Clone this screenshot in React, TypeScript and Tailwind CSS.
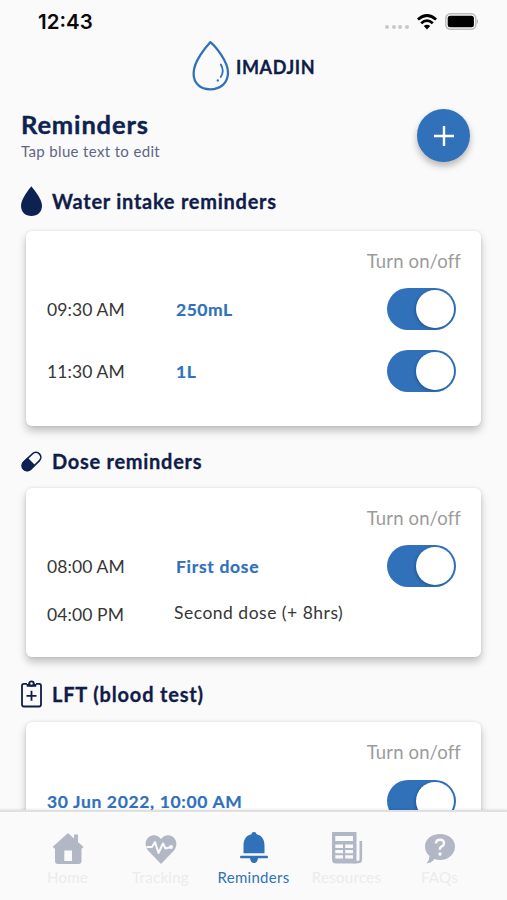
import type { ReactNode } from "react";

function Toggle() {
  return (
    <div className="flex h-[42px] w-[69px] items-center justify-end rounded-full bg-[#3071ba] pr-[2px]">
      <div className="size-[38px] rounded-full bg-white shadow-[-1px_1px_3px_rgba(0,0,40,0.25)]" />
    </div>
  );
}

function SectionTitle({ icon, children }: { icon: ReactNode; children: ReactNode }) {
  return (
    <div className="flex h-[30px] items-center [-webkit-text-stroke:0.3px]">
      <div className="flex w-[31px] shrink-0 items-center">{icon}</div>
      {children}
    </div>
  );
}

function Card({ className, children }: { className: string; children: ReactNode }) {
  return (
    <div
      className={`mx-[5px] rounded-[6px] bg-white pt-[19px] pl-[21px] shadow-[0_5px_8px_rgba(0,0,0,0.23),0_0_3px_rgba(0,0,0,0.1)] ${className}`}
    >
      <div className="flex h-[24px] items-center justify-end pr-[20px] text-[18.5px] tracking-[0.15px] text-[#9b9b9b]">
        Turn on/off
      </div>
      {children}
    </div>
  );
}

function Row({ time, children, toggle }: { time: string; children: ReactNode; toggle?: boolean }) {
  return (
    <div className="flex items-center">
      <div className="w-[129px] pt-[2px] text-[17.5px] tracking-[0.1px] text-[#363636]">{time}</div>
      <div className="flex grow">{children}</div>
      {toggle && (
        <div className="pr-[25px]">
          <Toggle />
        </div>
      )}
    </div>
  );
}

function NavItem({ label, active, children }: { label: ReactNode; active?: boolean; children: ReactNode }) {
  return (
    <div className={`flex w-[93px] flex-col items-center ${active ? "text-[#3071ba]" : "text-[#b2b7c5]"}`}>
      <svg width="36" height="36" viewBox="0 0 36 36" fill="currentColor">
        {children}
      </svg>
      <div className={`mt-[2px] h-[20px] text-[15px] leading-[20px] whitespace-nowrap ${active ? "" : "text-[#ebecee]"}`}>
        {label}
      </div>
    </div>
  );
}

export default function App() {
  return (
    <div className="flex h-[900px] w-[507px] flex-col overflow-hidden bg-[#fafafa] font-['Lato',sans-serif]">
      <header className="flex h-[41px] shrink-0 items-center pt-[3px] pr-[28px] pl-[38px]">
        <div className="font-['Inter',sans-serif] text-[20.5px] font-semibold text-[#0a0a0a]">12:43</div>
        <div className="ml-auto flex items-center">
          <div className="mt-[9px] mr-[8.5px] flex gap-[2.4px]">
            <i className="size-[4px] rounded-full bg-[#c8c8c8]" />
            <i className="size-[4px] rounded-full bg-[#c8c8c8]" />
            <i className="size-[4px] rounded-full bg-[#c8c8c8]" />
            <i className="size-[4px] rounded-full bg-[#c8c8c8]" />
          </div>
          <svg width="20" height="16" viewBox="0 0 20 16" fill="none" stroke="#000" strokeWidth="2.8">
            <path d="M.9 5.5Q10-2.4 19.1 5.5" />
            <path d="M4.2 9.2Q10 4 15.8 9.2" />
            <path d="M6.8 12Q10 9.4 13.2 12L10 15.4Z" fill="#000" stroke="none" />
          </svg>
          <svg className="-mt-[1px] ml-[8px]" width="34" height="17" viewBox="0 0 34 17">
            <rect x=".8" y=".8" width="30" height="15.4" rx="4.5" fill="#fafafa" stroke="#bdbdbd" strokeWidth="1.5" />
            <rect x="2.7" y="2.7" width="26.2" height="11.6" rx="2.5" />
            <path d="M32 6Q34 8.5 32 11Z" fill="#aaa" />
          </svg>
        </div>
      </header>

      <div className="flex h-[50px] shrink-0 items-center pl-[192px]">
        <svg width="38" height="50" viewBox="0 0 38 50" fill="none" stroke="#3071ba" strokeLinecap="round" strokeLinejoin="round">
          <path
            d="M18.3 1.2C13.8 6 1.6 20.5 1.6 32.5C1.6 42.5 8.6 48.3 18 48.3C28.5 48.3 36 42 36 31.5C36 20.5 23.4 5.2 18.3 1.2Z"
            strokeWidth="2.3"
          />
          <path d="M28.8 23.5Q32.8 30 28.7 36" strokeWidth="1.8" />
          <circle cx="25.8" cy="39.4" r=".6" strokeWidth="1.2" />
        </svg>
        <div className="mt-[2px] ml-[6px] text-[18px] font-bold tracking-[0.6px] text-[#101c49] [-webkit-text-stroke:0.3px]">
          IMADJIN
        </div>
      </div>

      <div className="flex h-[95px] shrink-0 pt-[18px] pr-[37px] pl-[21px]">
        <div className="grow">
          <h1 className="-mt-[1px] h-[33px] text-[25.5px] leading-[32px] font-bold text-[#0e2251] [-webkit-text-stroke:0.4px]">
            <span className="tracking-[0.85px]">Reminders</span>
          </h1>
          <p className="h-[20px] text-[15px] leading-[20px] tracking-[0.35px] text-[#5f6685]">Tap blue text to edit</p>
        </div>
        <div className="flex size-[53px] items-center justify-center rounded-full bg-[#3071ba] shadow-[0_4px_7px_rgba(0,0,0,0.28)]">
          <svg width="20" height="20" viewBox="0 0 20 20" stroke="#fff" strokeWidth="2.4">
            <path d="M0 10H20M10 0V20" />
          </svg>
        </div>
      </div>

      <main className="min-h-0 grow overflow-hidden px-[21px] text-[20px] text-[#101c49]">
        <SectionTitle
          icon={
            <svg width="21" height="30" viewBox="0 0 21 30" fill="#0e2251">
              <path d="M10.3.2C7.2 4 0 13.5 0 19.5C0 26 4.2 30 10.4 30C16.5 30 21 26 21 19.5C21 13.5 13.5 4 10.3.2Z" />
            </svg>
          }
        >
          <span className="font-bold tracking-[0.74px]">Water intake reminders</span>
        </SectionTitle>

        <Card className="mt-[15px] h-[195px]">
          <div className="mt-[14px]">
            <Row time="09:30 AM" toggle>
              <span className="pt-[2px] text-[17.5px] font-bold tracking-[0.5px] text-[#3071ba] [-webkit-text-stroke:0.2px]">250mL</span>
            </Row>
          </div>
          <div className="mt-[20px]">
            <Row time="11:30 AM" toggle>
              <span className="pt-[2px] text-[17.5px] font-bold tracking-[0.5px] text-[#3071ba] [-webkit-text-stroke:0.2px]">1L</span>
            </Row>
          </div>
        </Card>

        <div className="mt-[20px]">
          <SectionTitle
            icon={
              <svg width="21" height="21" viewBox="0 0 21 21">
                <g transform="rotate(-44 10.5 10.5)">
                  <rect x="-.5" y="5.6" width="22" height="9.8" rx="4.9" fill="none" stroke="#0e2251" strokeWidth="1.7" />
                  <path d="M10.5 4.8V16.2H4.6A5.7 5.7 0 0 1 4.6 4.8Z" fill="#0e2251" />
                </g>
              </svg>
            }
          >
            <span className="font-bold tracking-[0.72px]">Dose reminders</span>
          </SectionTitle>
        </div>

        <Card className="mt-[12px] h-[169px]">
          <div className="mt-[14px]">
            <Row time="08:00 AM" toggle>
              <span className="pt-[3px] text-[17.5px] font-bold tracking-[0.7px] text-[#3071ba] [-webkit-text-stroke:0.2px]">
                First dose
              </span>
            </Row>
          </div>
          <div className="mt-[13px]">
            <Row time="04:00 PM">
              <span className="-mt-[2px] -ml-[2px] text-[17.5px] tracking-[0.5px] text-[#363636]">Second dose (+ 8hrs)</span>
            </Row>
          </div>
        </Card>

        <div className="mt-[22px]">
          <SectionTitle
            icon={
              <svg width="21" height="28" viewBox="0 0 21 28" fill="none" stroke="#101c49" strokeWidth="1.8">
                <path d="M6 3.9H2.8Q1 3.9 1 5.7V24.6Q1 26.5 2.8 26.5H18.2Q20 26.5 20 24.6V5.7Q20 3.9 18.2 3.9H15" />
                <path d="M5.7 6.7V3.9H7.4Q7.8 1.2 10.5 1.2T13.6 3.9H15.3V6.7Z" fill="#101c49" stroke="none" />
                <circle cx="10.5" cy="3.6" r="2.2" strokeWidth="1.9" fill="#fafafa" />
                <path d="M5.5 15.8H15.5M10.5 10.8V20.8" />
              </svg>
            }
          >
            <span className="font-bold tracking-[0.82px]">LFT (blood test)</span>
          </SectionTitle>
        </div>

        <Card className="mt-[13px] h-[169px]">
          <div className="mt-[15px] flex items-center justify-between pr-[25px]">
            <span className="pt-[2px] text-[17.5px] font-bold tracking-[0.65px] text-[#3071ba] [-webkit-text-stroke:0.2px]">
              30 Jun 2022, 10:00 AM
            </span>
            <Toggle />
          </div>
        </Card>
      </main>

      <nav className="relative z-10 flex h-[90px] shrink-0 justify-center border-t-2 border-[#dfe0e3] bg-[#fafafa] pt-[17px] shadow-[0_-1px_2px_rgba(0,0,0,0.08)]">
        <NavItem label={<span className="tracking-[0.3px]">Home</span>}>
          <path
            fillRule="evenodd"
            d="M18 4L24 9.5V5.5H28V13L33.5 18L32 19.5H31.5V32Q31.5 35 28.5 35H8Q5 35 5 32V19.5H4.2L2.8 17.8ZM14.3 21.5V32H22V21.5Z"
          />
        </NavItem>
        <NavItem label={<span className="tracking-[0.3px]">Tracking</span>}>
          <path d="M18 35L5 21.5C-1 13 5.5 5 12 6.3Q16 7 18 10Q20 7 24 6.3C30.5 5 37 13 31 21.5Z" />
          <path
            d="M3.5 18H9L12 13L15.5 24L20 14.5L22.5 19.5L28 18"
            fill="none"
            stroke="#fafafa"
            strokeWidth="2"
            strokeLinejoin="round"
          />
          <circle cx="28" cy="18" r="2" fill="#fafafa" />
        </NavItem>
        <NavItem active label={<span className="tracking-[0.3px]">Reminders</span>}>
          <path d="M18 3Q20.3 3 20.6 5.3C26.5 6.8 28.5 11 28.5 17V24.2H7.5V17C7.5 11 9.5 6.8 15.4 5.3Q15.7 3 18 3Z" />
          <path d="M5 26.8H31Q32 26.8 32 28T31 29.2H22Q21.5 34 18 34T14 29.2H5Q4 29.2 4 28T5 26.8Z" />
        </NavItem>
        <NavItem label={<span className="tracking-[0.3px]">Resources</span>}>
          <path
            fillRule="evenodd"
            d="M3 3H27.5V34.5H7Q3 34.5 3 30.5ZM6.3 7V12H24V7ZM6.3 15.5V19H14V15.5ZM16.2 15.5V19H24V15.5ZM6.3 21V24.3H14V21ZM16.2 21V24.3H24V21ZM6.3 26.3V29.5H14V26.3ZM16.2 26.3V29.5H24V26.3Z"
          />
          <path d="M24 33H29.5Q31.8 33 31.8 30.5V12" fill="none" stroke="currentColor" strokeWidth="2.6" />
        </NavItem>
        <NavItem label={<span className="tracking-[0.3px]">FAQs</span>}>
          <path d="M18 5C26.5 5 33 10 33 17.5S26.5 31 18 31Q15 31 12.5 30Q9.5 34 4.5 34.5Q7.5 31 7.5 27Q3 23 3 17.5C3 10 9.5 5 18 5Z" />
          <path d="M14 14.5Q14 10.8 18 10.8T22 14.3Q22 16.3 19.8 17.4T18 20.8" fill="none" stroke="#fafafa" strokeWidth="2.4" />
          <circle cx="18" cy="25" r="1.7" fill="#fafafa" />
        </NavItem>
      </nav>
    </div>
  );
}
